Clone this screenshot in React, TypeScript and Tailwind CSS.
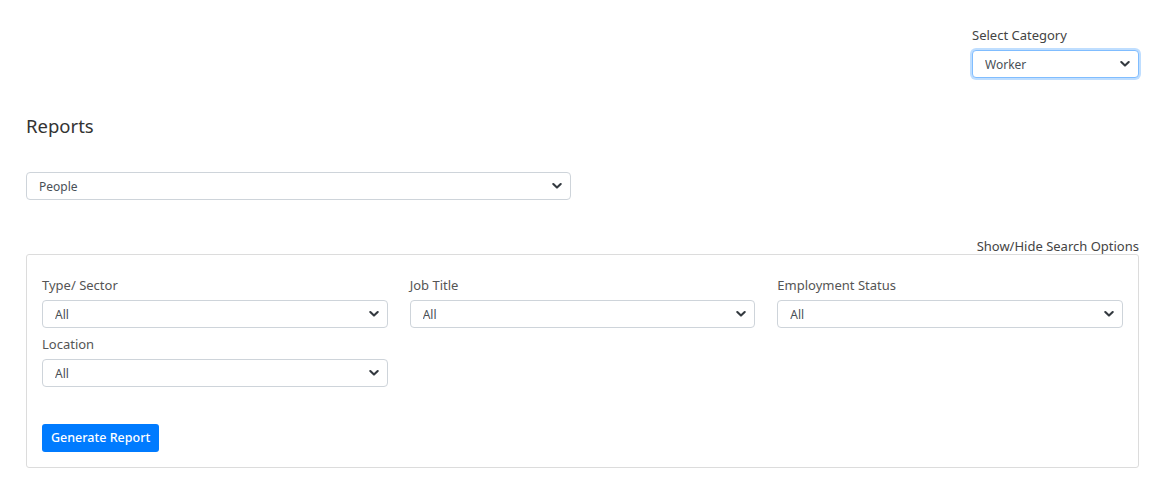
import React from 'react';

const font = { fontFamily: '"Noto Sans", Arial, sans-serif' };

const Chevron = () => (
  <svg
    className="pointer-events-none absolute right-[9px] top-1/2 -translate-y-1/2"
    width="10"
    height="7"
    viewBox="0 0 10 7"
    fill="none"
  >
    <path d="M1.3 1.5 5 5.1 8.7 1.5" stroke="#343a40" strokeWidth="2.1" strokeLinecap="round" strokeLinejoin="round" />
  </svg>
);

interface SelectProps {
  value: string;
  options: string[];
  className?: string;
  focused?: boolean;
}

const Select: React.FC<SelectProps> = ({ value, options, className = '', focused }) => (
  <div className={`relative ${className}`}>
    <select
      defaultValue={value}
      className={`block h-[28px] w-full appearance-none rounded-[4px] border bg-white pt-[2px] pl-[12px] pr-[28px] text-[12px] text-[#495057] outline-none ${
        focused ? 'border-[#80bdff] shadow-[0_0_0_2px_rgba(0,123,255,0.25)]' : 'border-[#ced4da]'
      }`}
    >
      {options.map(o => (
        <option key={o}>{o}</option>
      ))}
    </select>
    <Chevron />
  </div>
);

const Field: React.FC<{ label: string }> = ({ label }) => (
  <div>
    <label className="block text-[13px] leading-[21px] text-[#555]">{label}</label>
    <Select value="All" options={['All']} className="mt-[4px]" />
  </div>
);

export default function App() {
  return (
    <div className="min-h-screen bg-white px-[26px] pt-[25px] pb-[12px] text-[#333]" style={font}>
      <div className="flex justify-end pr-[5px]">
        <div className="w-[167px]">
          <label className="block text-[13px] leading-[21px] text-[#444]">Select Category</label>
          <Select value="Worker" options={['Worker', 'Employer']} className="mt-[4px]" focused />
        </div>
      </div>

      <h2 className="mt-[35px] text-[18.5px] leading-[26px] text-[#333]">Reports</h2>

      <Select value="People" options={['People', 'Companies']} className="mt-[33px] w-[545px]" />

      <div className="mt-[37px] pt-[1px] pr-[5px] text-right text-[13px] leading-[16px] text-[#444]">
        Show/Hide Search Options
      </div>

      <div className="mr-[5px] rounded-[3px] border border-[#dcdcdc] px-[15px] pt-[20px] pb-[15px]">
        <div className="grid grid-cols-3 gap-x-[22px] gap-y-[6px]">
          <Field label="Type/ Sector" />
          <Field label="Job Title" />
          <Field label="Employment Status" />
          <Field label="Location" />
        </div>
        <button className="mt-[37px] h-[28px] rounded-[3px] bg-[#007bff] px-[9px] pt-[1px] text-[12.5px] font-medium text-white">
          Generate Report
        </button>
      </div>
    </div>
  );
}
